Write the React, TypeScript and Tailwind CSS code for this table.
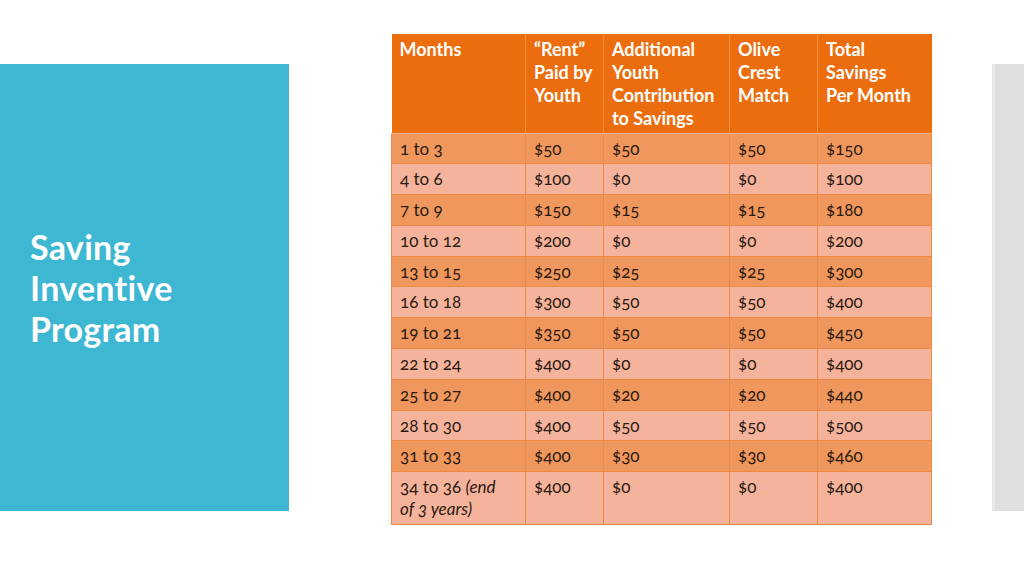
const header: string[][] = [
  ["Months"],
  ["\u201cRent\u201d", "Paid by", "Youth"],
  ["Additional", "Youth", "Contribution", "to Savings"],
  ["Olive", "Crest", "Match"],
  ["Total", "Savings", "Per Month"],
];

const rows: string[][] = [
  ["1 to 3", "$50", "$50", "$50", "$150"],
  ["4 to 6", "$100", "$0", "$0", "$100"],
  ["7 to 9", "$150", "$15", "$15", "$180"],
  ["10 to 12", "$200", "$0", "$0", "$200"],
  ["13 to 15", "$250", "$25", "$25", "$300"],
  ["16 to 18", "$300", "$50", "$50", "$400"],
  ["19 to 21", "$350", "$50", "$50", "$450"],
  ["22 to 24", "$400", "$0", "$0", "$400"],
  ["25 to 27", "$400", "$20", "$20", "$440"],
  ["28 to 30", "$400", "$50", "$50", "$500"],
  ["31 to 33", "$400", "$30", "$30", "$460"],
];

const widths = ["w-[134px]", "w-[78px]", "w-[126px]", "w-[88px]", "w-[114px]"];

const cell = "align-top px-[8px] pt-[4px] leading-[22px] text-[#2b1a10] border border-[#ee8a45] whitespace-nowrap";

export default function App() {
  return (
    <div
      className="flex items-start w-[1024px] h-[576px] bg-white overflow-hidden"
      style={{ fontFamily: "Lato, 'Open Sans', sans-serif" }}
    >
      <div className="mt-[64px] w-[289px] h-[447px] bg-[#3eb7d3] flex items-center pl-[30px] shrink-0">
        <h1 className="text-white text-[34px] leading-[41px] font-bold pb-[1px] tracking-[0.3px]">
          Saving
          <br />
          Inventive
          <br />
          Program
        </h1>
      </div>

      <table className="ml-[102px] mt-[34px] w-[540px] border-collapse table-fixed text-[17px] oldstyle-nums shrink-0">
        <thead>
          <tr className="bg-[#ec6d0d] h-[99px]">
            {header.map((h, i) => (
              <th
                key={i}
                className={`${widths[i]} align-top text-left font-bold text-white text-[18px] leading-[23px] px-[8px] pt-[4px] whitespace-nowrap border-x border-[#f08a3c] first:border-l-0 last:border-r-0 border-b border-b-[#f4b58c]`}
              >
                {h.map((line, li) => (
                  <div key={li}>{line}</div>
                ))}
              </th>
            ))}
          </tr>
        </thead>
        <tbody>
          {rows.map((r, ri) => (
            <tr key={ri} className={`h-[30.8px] ${ri % 2 === 0 ? "bg-[#f0975d]" : "bg-[#f5b39c]"}`}>
              {r.map((c, ci) => (
                <td key={ci} className={cell}>
                  {c}
                </td>
              ))}
            </tr>
          ))}
          <tr className="h-[53px] bg-[#f5b39c]">
            <td className={cell}>
              34 to 36 <em>(end</em>
              <br />
              <em>of 3 years)</em>
            </td>
            {["$400", "$0", "$0", "$400"].map((c, i) => (
              <td key={i} className={cell}>
                {c}
              </td>
            ))}
          </tr>
        </tbody>
      </table>

      <div className="ml-auto mt-[64px] w-[32px] h-[447px] bg-[#e0e0e0] border-l-[3px] border-[#e9e9e9] shrink-0" />
    </div>
  );
}
